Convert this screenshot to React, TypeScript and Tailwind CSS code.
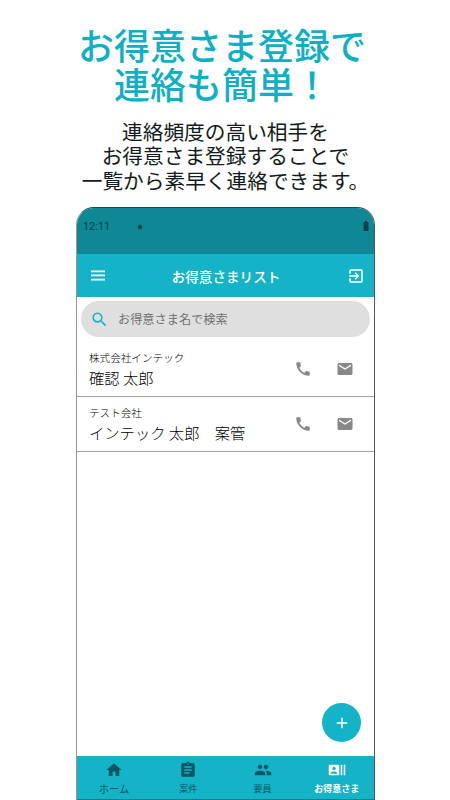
import React from "react";
import {
  MdAdd,
  MdAssignment,
  MdBatteryFull,
  MdCall,
  MdEmail,
  MdExitToApp,
  MdHome,
  MdPeople,
  MdRecentActors,
  MdSearch,
} from "react-icons/md";

type Contact = { company: string; name: string };

const contacts: Contact[] = [
  { company: "株式会社インテック", name: "確認 太郎" },
  { company: "テスト会社", name: "インテック 太郎　案管" },
];

function ContactRow({ company, name }: Contact) {
  return (
    <li className="flex h-[55px] items-center border-b border-[#a3a3a3] pr-5 pl-3">
      <div className="flex-1 whitespace-pre">
        <p className="h-[17px] text-[10.6px] leading-[17px] font-light text-black">{company}</p>
        <p className="h-[23px] text-[15.3px] leading-[23px] font-light text-black">{name}</p>
      </div>
      <div className="flex items-center gap-6 pb-px text-[#888]">
        <MdCall size={18} />
        <MdEmail size={18} />
      </div>
    </li>
  );
}

const tabs = [
  { label: "ホーム", Icon: MdHome, style: "text-[#075762]", labelSize: "text-[10.3px]" },
  { label: "案件", Icon: MdAssignment, style: "text-[#075762]", labelSize: "text-[9px]" },
  { label: "要員", Icon: MdPeople, style: "text-[#075762]", labelSize: "text-[9px]" },
  { label: "お得意さま", Icon: MdRecentActors, style: "text-white font-bold", labelSize: "text-[9px]" },
];

export default function App() {
  return (
    <div className="flex h-[800px] w-[450px] flex-col overflow-hidden bg-white font-['Noto_Sans_CJK_JP',sans-serif]">
      <h1 className="mt-6 mr-1.5 text-center text-[36px] leading-10 font-medium whitespace-nowrap text-[#0fb0c5]">
        <span className="block">お得意さま登録で</span>
        <span className="-mt-px block">連絡も簡単！</span>
      </h1>
      <p className="mt-4 ml-px h-[88px] text-center text-[20.7px] leading-[24.4px] whitespace-nowrap text-[#111c20]">
        連絡頻度の高い相手を
        <br />
        お得意さま登録することで
        <br />
        一覧から素早く連絡できます。
      </p>
      <main className="ml-[76px] flex h-[593px] w-[299px] flex-col overflow-hidden rounded-t-[18px] border border-b-0 border-[#999] border-t-[#08525c] border-r-[#555] bg-white">
        <div className="flex h-[46px] shrink-0 items-start justify-between bg-[#0f8794] pr-0.5 pl-1.5 text-[#06424a]">
          <div className="flex items-center pt-[11px]">
            <span className="font-['Roboto',sans-serif] text-[10.9px] leading-4">12:11</span>
            <span className="ml-7 size-1 rounded-full bg-[#033036]" />
          </div>
          <MdBatteryFull className="mt-3" size={12} />
        </div>
        <header className="flex h-[43px] shrink-0 items-center justify-between bg-[#14b3c8] pr-[9px] pl-3.5 text-white">
          <svg className="h-[11px] w-3.5" viewBox="0 0 14 11" fill="currentColor">
            <path d="M0 .5h14v1.7H0zM0 4.6h14v1.7H0zM0 8.7h14v1.7H0z" />
          </svg>
          <h2 className="text-[13.6px] leading-5 font-medium">お得意さまリスト</h2>
          <MdExitToApp size={18} />
        </header>
        <div className="mx-1 mt-1 flex h-9 shrink-0 items-center rounded-full bg-[#dfdfdf] pl-[9px]">
          <MdSearch size={19} className="text-[#14b3c8]" />
          <span className="ml-[9px] text-[12.2px] leading-5 text-[#707070]">お得意さま名で検索</span>
        </div>
        <ul className="mt-[5px]">
          {contacts.map((contact) => (
            <ContactRow key={contact.company} {...contact} />
          ))}
        </ul>
        <button className="mt-auto mr-[13px] mb-3.5 flex size-[39px] shrink-0 items-center justify-center self-end rounded-full bg-[#14b3c8] text-white">
          <MdAdd size={18} />
        </button>
        <nav className="grid h-11 shrink-0 grid-cols-4 border-b border-[#07818f] bg-[#14b3c8]">
          {tabs.map(({ label, Icon, style, labelSize }) => (
            <div key={label} className={`flex flex-col items-center pt-[5px] ${style}`}>
              <Icon size={18} />
              <span className={`mt-[3px] leading-[14px] whitespace-nowrap ${labelSize}`}>{label}</span>
            </div>
          ))}
        </nav>
      </main>
    </div>
  );
}
